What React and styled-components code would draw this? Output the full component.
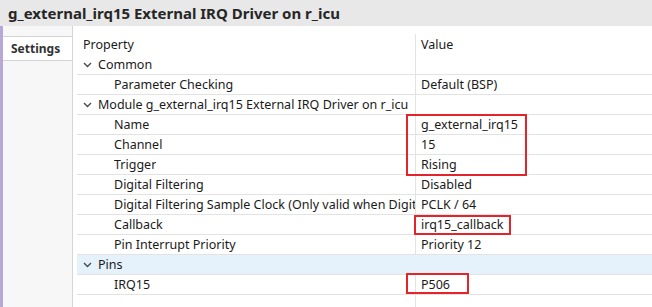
import styled, { createGlobalStyle } from 'styled-components';

const GlobalStyle = createGlobalStyle`
  html, body {
    margin: 0;
    padding: 0;
    background: #ffffff;
  }
  body {
    font-family: "Noto Sans", "Liberation Sans", sans-serif;
    color: #1a1a1a;
  }
`;

const rows = [
  { kind: 'group', label: 'Common', value: '' },
  { kind: 'item', label: 'Parameter Checking', value: 'Default (BSP)' },
  { kind: 'group', label: 'Module g_external_irq15 External IRQ Driver on r_icu', value: '' },
  { kind: 'item', label: 'Name', value: 'g_external_irq15' },
  { kind: 'item', label: 'Channel', value: '15' },
  { kind: 'item', label: 'Trigger', value: 'Rising' },
  { kind: 'item', label: 'Digital Filtering', value: 'Disabled' },
  { kind: 'item', label: 'Digital Filtering Sample Clock (Only valid when Digital Filtering is Enabled)', value: 'PCLK / 64' },
  { kind: 'item', label: 'Callback', value: 'irq15_callback' },
  { kind: 'item', label: 'Pin Interrupt Priority', value: 'Priority 12' },
  { kind: 'group', label: 'Pins', value: '', selected: true },
  { kind: 'item', label: 'IRQ15', value: 'P506' },
];

// red annotation boxes drawn over the screenshot
const marks = [
  { left: 406, top: 114, width: 121, height: 62 },
  { left: 414, top: 215, width: 97, height: 20 },
  { left: 406, top: 273, width: 63, height: 21 },
];

const Chevron = () => (
  <svg width="9" height="6" viewBox="0 0 9 6">
    <path d="M1 1 L4.5 4.5 L8 1" fill="none" stroke="#4a4a4a" strokeWidth="1.4" />
  </svg>
);

export default function App() {
  return (
    <>
      <GlobalStyle />
      <Page>
        <TitleBar>g_external_irq15 External IRQ Driver on r_icu</TitleBar>
        <Main>
          <Sidebar>
            <Tab>Settings</Tab>
          </Sidebar>
          <TableArea>
            <Table>
              <HeaderRow>
                <Cell>Property</Cell>
                <ValueCell>Value</ValueCell>
              </HeaderRow>
              {rows.map((row, index) => (
                <Row key={index} selected={row.selected}>
                  <Cell indent={row.kind === 'item'}>
                    {row.kind === 'group' && (
                      <Toggle>
                        <Chevron />
                      </Toggle>
                    )}
                    <Label>{row.label}</Label>
                  </Cell>
                  <ValueCell>{row.value}</ValueCell>
                </Row>
              ))}
            </Table>
          </TableArea>
        </Main>
        {marks.map((m, i) => (
          <Mark key={i} style={{ left: m.left, top: m.top, width: m.width, height: m.height }} />
        ))}
      </Page>
    </>
  );
}

const Page = styled.div`
  position: relative;
  width: 652px;
  height: 307px;
  overflow: hidden;
  display: flex;
  flex-direction: column;
`;

const TitleBar = styled.div`
  height: 26px;
  flex-shrink: 0;
  background: #e8e8e8;
  padding-left: 8px;
  font-size: 15px;
  font-weight: 700;
  line-height: 26px;
  color: #262626;
  white-space: nowrap;
`;

const Main = styled.div`
  flex: 1;
  display: flex;
  border-left: 3px solid #b7a8d8;
`;

const Sidebar = styled.div`
  width: 69px;
  flex-shrink: 0;
  padding-top: 10px;
  background: #f7f7f7;
  border-right: 1px solid #d6d6d6;
`;

const Tab = styled.div`
  height: 23px;
  background: #ffffff;
  border-top: 1px solid #d4d4d4;
  border-bottom: 1px solid #d4d4d4;
  padding-left: 8px;
  font-size: 12px;
  font-weight: 700;
  line-height: 23px;
  color: #333;
`;

const TableArea = styled.div`
  flex: 1;
  padding: 8px 0 0 4px;
  min-width: 0;
`;

const Table = styled.div`
  display: flex;
  flex-direction: column;
  min-height: 100%;
  background: linear-gradient(#e3e3e3, #e3e3e3) 338px 0 / 1px 100% no-repeat;
`;

const HeaderRow = styled.div`
  display: grid;
  grid-template-columns: 338px 1fr;
  height: 21px;
  align-items: center;
`;

const Row = styled.div`
  display: grid;
  grid-template-columns: 338px 1fr;
  height: 19px;
  align-items: center;
  border-bottom: 1px solid #e3e3e3;
  background: ${({ selected }) => (selected ? '#e5f1fb' : 'transparent')};
`;

const Cell = styled.div`
  display: flex;
  align-items: center;
  min-width: 0;
  padding-left: ${({ indent }) => (indent ? '37px' : '6px')};
  font-size: 12.5px;
  white-space: nowrap;
  overflow: hidden;
`;

const Label = styled.span`
  overflow: hidden;
  text-overflow: clip;
`;

const ValueCell = styled.div`
  padding-left: 6px;
  font-size: 12.5px;
  white-space: nowrap;
  overflow: hidden;
`;

const Toggle = styled.span`
  display: inline-flex;
  flex-shrink: 0;
  width: 15px;
  align-items: center;
`;

const Mark = styled.div`
  position: absolute;
  box-sizing: border-box;
  border: 2px solid #e3242b;
`;
